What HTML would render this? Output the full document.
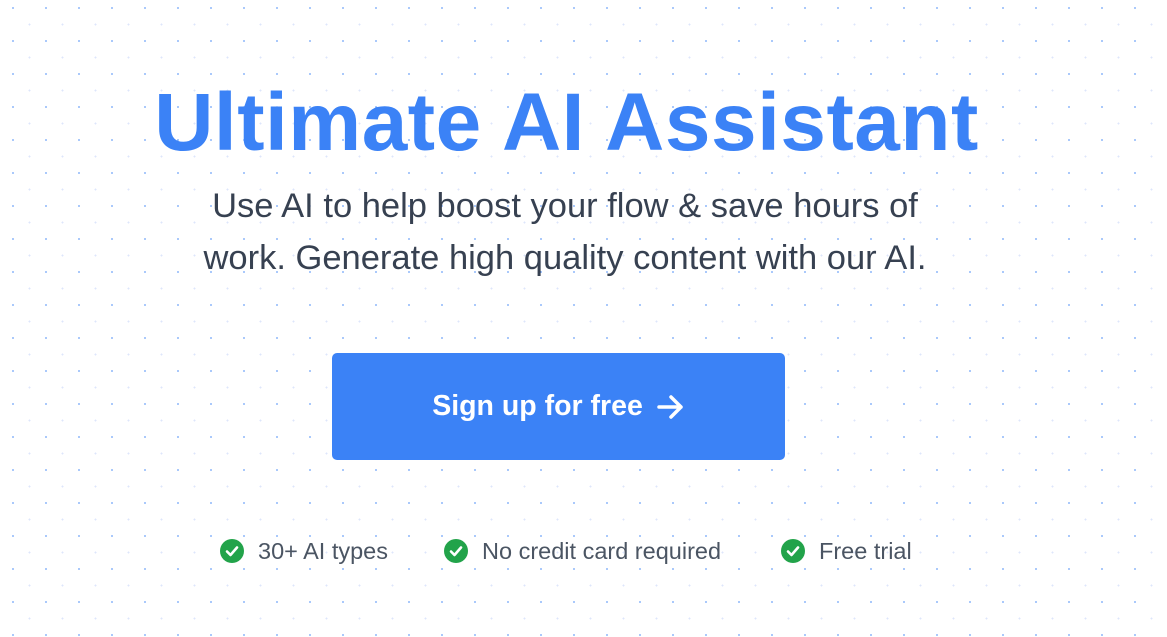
<!DOCTYPE html>
<html><head><style>
html,body{margin:0;padding:0}
body{width:1167px;height:637px;overflow:hidden;position:relative;font-family:"Liberation Sans",sans-serif;
background-color:#fff;
background-image:radial-gradient(circle,#3b82f6 0.6px,transparent 0.9px),radial-gradient(circle,#dde6fb 0.8px,transparent 1.1px);
background-size:33px 33px,33px 33px;
background-position:-3.5px -8.5px,13px 8px;}
h1{position:absolute;left:0;width:1133px;top:75px;margin:0;text-align:center;font-size:82px;font-weight:bold;color:#3b82f6;letter-spacing:0.5px;line-height:96px}
.sub{position:absolute;left:0;width:1130px;top:180px;text-align:center;font-size:34.5px;line-height:52px;color:#374151}
.btn{position:absolute;left:332px;top:353px;width:453px;height:107px;background:#3b82f6;border-radius:5px;color:#fff;font-weight:bold;font-size:28.5px;display:flex;align-items:center;justify-content:center;gap:14px}
.feat{position:absolute;top:538px;font-size:23.5px;color:#4b5563;display:flex;align-items:center;gap:14px;line-height:26px}
.c{width:24px;height:24px;border-radius:50%;background:#22a34a;display:inline-flex;align-items:center;justify-content:center}
</style></head><body>
<h1>Ultimate AI Assistant</h1>
<div class="sub">Use AI to help boost your flow &amp; save hours of<br>work. Generate high quality content with our AI.</div>
<div class="btn">Sign up for free <svg width="28" height="26" viewBox="0 0 28 26"><path d="M2 13H24M14 3L24 13L14 23" stroke="#fff" stroke-width="3.5" fill="none" stroke-linecap="round" stroke-linejoin="round"/></svg></div>
<div class="feat" style="left:220px"><span class="c"><svg width="14" height="14" viewBox="0 0 14 14"><path d="M2 7.5L5.5 11L12 3.5" stroke="#fff" stroke-width="2.6" fill="none" stroke-linecap="round" stroke-linejoin="round"/></svg></span>30+ AI types</div>
<div class="feat" style="left:444px"><span class="c"><svg width="14" height="14" viewBox="0 0 14 14"><path d="M2 7.5L5.5 11L12 3.5" stroke="#fff" stroke-width="2.6" fill="none" stroke-linecap="round" stroke-linejoin="round"/></svg></span>No credit card required</div>
<div class="feat" style="left:781px"><span class="c"><svg width="14" height="14" viewBox="0 0 14 14"><path d="M2 7.5L5.5 11L12 3.5" stroke="#fff" stroke-width="2.6" fill="none" stroke-linecap="round" stroke-linejoin="round"/></svg></span>Free trial</div>
</body></html>
